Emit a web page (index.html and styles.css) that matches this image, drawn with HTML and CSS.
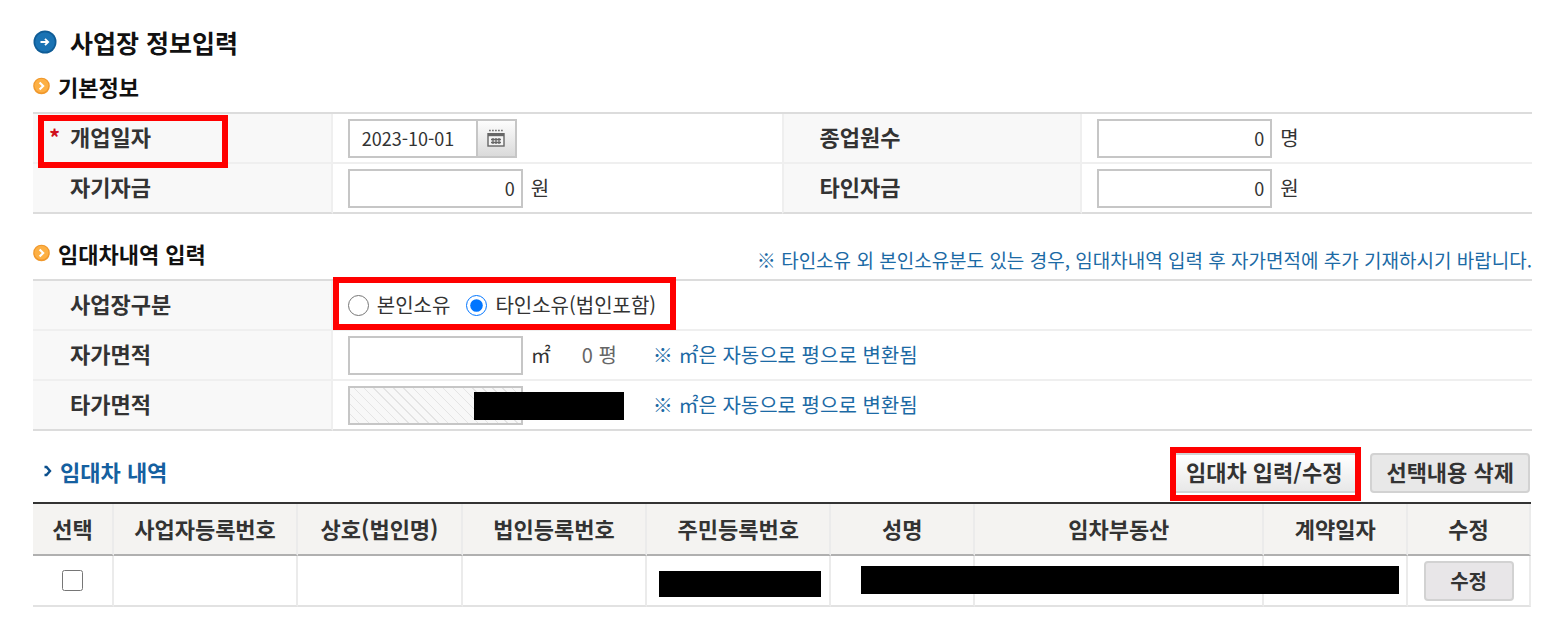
FILE: index.html
```html
<!DOCTYPE html>
<html lang="ko">
<head>
    <meta charset="UTF-8">
    <meta name="viewport" content="width=device-width, initial-scale=1.0">
    <title>사업장 정보입력</title>
    <link rel="stylesheet" href="styles.css">
</head>
<body>

<h1>
    <svg class="icon-title" viewBox="0 0 24 24" aria-hidden="true">
        <circle cx="12" cy="12" r="11.5" fill="#0f5c96"/>
        <circle cx="12" cy="12" r="9.8" fill="#1a73b4"/>
        <path d="M7.500 12h7.500M12 8.800l3.200 3.200-3.200 3.200" fill="none" stroke="#fff" stroke-width="1.8"/>
    </svg>
    사업장 정보입력
</h1>

<!-- 기본정보 -->
<div class="section-head">
    <h2>
        <svg class="icon-section" viewBox="0 0 18 18" aria-hidden="true">
            <circle cx="9" cy="9" r="8.8" fill="#f0982c"/>
            <circle cx="9" cy="8.6" r="7.4" fill="#fdb044"/>
            <path d="M7 5.2L10.8 9 7 12.8" fill="none" stroke="#fff" stroke-width="2.2"/>
        </svg>
        기본정보
    </h2>
</div>
<table class="form-table">
    <colgroup>
        <col class="col-label"><col class="col-value"><col class="col-label"><col class="col-value">
    </colgroup>
    <tbody>
        <tr>
            <th class="required marked mark-date"><label for="open-date">개업일자</label></th>
            <td>
                <div class="field date-field">
                    <input type="text" id="open-date" value="2023-10-01">
                    <button type="button" class="btn-calendar" aria-label="달력">
                        <svg viewBox="0 0 18 18" aria-hidden="true">
                            <path d="M2 1.5h14" stroke="#777" stroke-width="1.6" stroke-dasharray="1.8 1.2"/>
                            <rect x="1" y="4.7" width="16" height="12.3" fill="#f4f4f4" stroke="#666" stroke-width="1.4"/>
                            <path d="M1 5.8h16" stroke="#666" stroke-width="2.8"/>
                            <path d="M4 10.5h10M4 13.5h10M6 9v6M9 9v6M12 9v6" stroke="#666" stroke-width="1.3"/>
                        </svg>
                    </button>
                </div>
            </td>
            <th><label for="staff">종업원수</label></th>
            <td>
                <div class="field"><input type="text" class="amount" id="staff" value="0"><span>명</span></div>
            </td>
        </tr>
        <tr>
            <th><label for="own-fund">자기자금</label></th>
            <td>
                <div class="field"><input type="text" class="amount" id="own-fund" value="0"><span>원</span></div>
            </td>
            <th><label for="other-fund">타인자금</label></th>
            <td>
                <div class="field"><input type="text" class="amount" id="other-fund" value="0"><span>원</span></div>
            </td>
        </tr>
    </tbody>
</table>

<!-- 임대차내역 입력 -->
<div class="section-head lease-head">
    <h2>
        <svg class="icon-section" viewBox="0 0 18 18" aria-hidden="true">
            <circle cx="9" cy="9" r="8.8" fill="#f0982c"/>
            <circle cx="9" cy="8.6" r="7.4" fill="#fdb044"/>
            <path d="M7 5.2L10.8 9 7 12.8" fill="none" stroke="#fff" stroke-width="2.2"/>
        </svg>
        임대차내역 입력
    </h2>
    <p class="notice">※ 타인소유 외 본인소유분도 있는 경우, 임대차내역 입력 후 자가면적에 추가 기재하시기 바랍니다.</p>
</div>
<table class="form-table">
    <colgroup>
        <col class="col-label"><col>
    </colgroup>
    <tbody>
        <tr>
            <th>사업장구분</th>
            <td class="marked mark-owner">
                <div class="field radios">
                    <label><input type="radio" name="owner">본인소유</label>
                    <label><input type="radio" name="owner" checked>타인소유(법인포함)</label>
                </div>
            </td>
        </tr>
        <tr>
            <th><label for="own-area">자가면적</label></th>
            <td>
                <div class="area">
                    <input type="text" class="amount" id="own-area">
                    <div class="area-unit"><span>㎡</span><span class="pyeong">0 평</span></div>
                    <span class="hint">※ ㎡은 자동으로 평으로 변환됨</span>
                </div>
            </td>
        </tr>
        <tr>
            <th><label for="other-area">타가면적</label></th>
            <td>
                <div class="area">
                    <input type="text" class="amount" id="other-area" disabled>
                    <div class="area-unit"></div>
                    <span class="hint">※ ㎡은 자동으로 평으로 변환됨</span>
                    <span class="mask mask-area"></span>
                </div>
            </td>
        </tr>
    </tbody>
</table>

<!-- 임대차 내역 목록 -->
<div class="list-head">
    <h3>
        <svg class="icon-list" viewBox="0 0 10 12" aria-hidden="true">
            <path d="M1.500 2h2l3.500 4-3.500 4h-2" fill="none" stroke="#0b4f8c" stroke-width="2.4"/>
        </svg>
        임대차 내역
    </h3>
    <div class="buttons">
        <div class="marked mark-edit"><button type="button" class="btn btn-light">임대차 입력/수정</button></div>
        <button type="button" class="btn">선택내용 삭제</button>
    </div>
</div>
<table class="list-table">
    <colgroup>
        <col class="c-check"><col class="c-biz"><col class="c-name"><col class="c-corp"><col class="c-id">
        <col class="c-person"><col class="c-estate"><col class="c-date"><col class="c-edit">
    </colgroup>
    <thead>
        <tr>
            <th>선택</th>
            <th>사업자등록번호</th>
            <th>상호(법인명)</th>
            <th>법인등록번호</th>
            <th>주민등록번호</th>
            <th>성명</th>
            <th>임차부동산</th>
            <th>계약일자</th>
            <th>수정</th>
        </tr>
    </thead>
    <tbody>
        <tr>
            <td><input type="checkbox" aria-label="선택"></td>
            <td></td>
            <td></td>
            <td></td>
            <td><span class="mask mask-id"></span></td>
            <td><span class="mask mask-lease"></span></td>
            <td></td>
            <td></td>
            <td><button type="button" class="btn btn-row">수정</button></td>
        </tr>
    </tbody>
</table>

</body>
</html>
```
FILE: styles.css
```css
*, *::before, *::after {
    box-sizing: border-box;
}

body {
    margin: 0;
    padding: 24px 30px 20px 33px;
    background-color: #fff;
    color: #333;
    font-family: "Noto Sans CJK KR", sans-serif;
    font-size: 20px;
    line-height: 28px;
}

input, button {
    font-family: inherit;
    color: #333;
}

h1, h2, h3, p {
    margin: 0;
}

h1, h2, h3 {
    display: flex;
    align-items: center;
    color: #111;
    font-weight: 700;
}

h1 {
    gap: 13px;
    height: 36px;
    font-size: 25px;
}

h2 {
    gap: 8px;
    font-size: 22px;
}

h3 {
    gap: 7px;
    padding-left: 10px;
    color: #1560a0;
    font-size: 22px;
}

.icon-title {
    width: 24px;
    height: 24px;
}

.icon-section {
    width: 17px;
    height: 18px;
}

.icon-list {
    width: 10px;
    height: 12px;
}

.section-head {
    display: flex;
    align-items: flex-start;
    justify-content: space-between;
    padding-top: 12px;
    height: 52px;
}

.lease-head {
    height: 65px;
    padding-top: 25px;
}

.notice {
    padding-top: 7px;
    color: #1c6aa5;
    font-size: 19px;
}

.hint {
    color: #1c6aa5;
}

/* 입력 테이블 */
.form-table {
    width: 100%;
    table-layout: fixed;
    border-collapse: separate;
    border-spacing: 0;
    border-top: 2px solid #dcdcdc;
}

.col-label {
    width: 20%;
}

.col-value {
    width: 30%;
}

.form-table th,
.form-table td {
    height: 50px;
    padding: 0 0 0 15px;
    border-bottom: 2px solid #efefef;
    text-align: left;
}

.form-table th {
    padding-bottom: 4px;
    padding-left: 37px;
    border-right: 2px solid #efefef;
    background-color: #f8f8f8;
    font-size: 22px;
}

.form-table td + th {
    padding-left: 35px;
    border-left: 2px solid #efefef;
}

.form-table tr:last-child th,
.form-table tr:last-child td {
    border-bottom-color: #dcdcdc;
}

.field {
    display: flex;
    align-items: center;
    gap: 8px;
}

input[type="text"] {
    width: 175px;
    height: 39px;
    padding: 0 6px;
    border: 2px solid #c6c6c6;
    background-color: #fff;
    font-size: 18px;
}

input[type="text"]:disabled {
    background: repeating-linear-gradient(45deg, #f8f8f8 0 6px, #e4e4e4 6px 7px);
}

.amount {
    text-align: right;
}

.date-field {
    gap: 0;
}

.date-field input[type="text"] {
    width: 130px;
    padding-left: 12px;
}

.btn-calendar {
    display: flex;
    align-items: center;
    justify-content: center;
    width: 39px;
    height: 39px;
    padding: 0;
    border: 2px solid #c6c6c6;
    border-left: 0;
    background: linear-gradient(#fdfdfd, #dadada);
}

.btn-calendar svg {
    width: 18px;
    height: 18px;
}

.radios {
    gap: 16px;
}

.radios label {
    display: flex;
    align-items: center;
    gap: 8px;
}

input[type="radio"] {
    width: 21px;
    height: 21px;
    margin: 0;
    accent-color: #0075ff;
}

.area {
    position: relative;
    display: grid;
    grid-template-columns: 175px 114px auto;
    align-items: center;
    gap: 8px;
}

.area-unit {
    display: flex;
    justify-content: space-between;
    padding-right: 28px;
}

.pyeong {
    color: #666;
}

/* 목록 */
.list-head {
    display: flex;
    align-items: center;
    justify-content: space-between;
    height: 71px;
    padding: 12px 2px 0 0;
}

.list-head h3 {
    padding-bottom: 4px;
}

.buttons {
    display: flex;
    gap: 12px;
}

.btn {
    display: block;
    height: 40px;
    padding: 0 14px 4px;
    border: 2px solid #d2d2d2;
    border-radius: 4px;
    background-color: #e8e8e8;
    font-size: 22px;
    font-weight: 700;
    line-height: 28px;
}

.btn-light {
    background: linear-gradient(#fff, #e8e8e8);
}

.btn-row {
    width: 90px;
    margin: 0 auto;
    padding: 0;
    background-color: #e8e6e8;
    font-size: 20px;
}

.list-table {
    width: calc(100% - 1px);
    table-layout: fixed;
    border-collapse: separate;
    border-spacing: 0;
    border-top: 2px solid #333;
}

.list-table th,
.list-table td {
    position: relative;
    padding: 0;
    border-right: 2px solid #ebebeb;
    text-align: center;
}

.list-table th {
    height: 52px;
    padding-bottom: 2px;
    border-bottom: 2px solid #b0b0b0;
    background-color: #f4f3f1;
    font-size: 22px;
}

.list-table td {
    height: 51px;
    border-bottom: 2px solid #e2e2e2;
}

.c-check { width: 5.4%; }
.c-biz { width: 12.3%; }
.c-name { width: 11%; }
.c-corp { width: 12.3%; }
.c-id { width: 12.3%; }
.c-person { width: 9.6%; }
.c-estate { width: 19.3%; }
.c-date { width: 9.6%; }
.c-edit { width: 8.2%; }

input[type="checkbox"] {
    display: block;
    width: 21px;
    height: 21px;
    margin: 0 auto;
}

/* 필수 입력 표시 */
.required::before {
    content: "*";
    position: absolute;
    left: 16px;
    color: #d0101c;
}

/* 강조 테두리 */
.marked {
    position: relative;
}

.marked::after {
    content: "";
    position: absolute;
    z-index: 1;
    border: 6px solid #f00;
    pointer-events: none;
}

.mark-date::after {
    top: 1px;
    left: 5px;
    width: 190px;
    height: 53px;
}

.mark-owner::after {
    top: -4px;
    left: 0;
    width: 343px;
    height: 53px;
}

.mark-edit::after {
    inset: -6px -3px -8px 0;
}

/* 개인정보 가림 */
.mask {
    position: absolute;
    z-index: 1;
    background-color: #000;
}

.mask-area {
    top: 6px;
    left: 126px;
    width: 150px;
    height: 28px;
}

.mask-id {
    top: 15px;
    left: 12px;
    width: 162px;
    height: 26px;
}

.mask-lease {
    top: 10px;
    left: 30px;
    width: 538px;
    height: 28px;
}
```
